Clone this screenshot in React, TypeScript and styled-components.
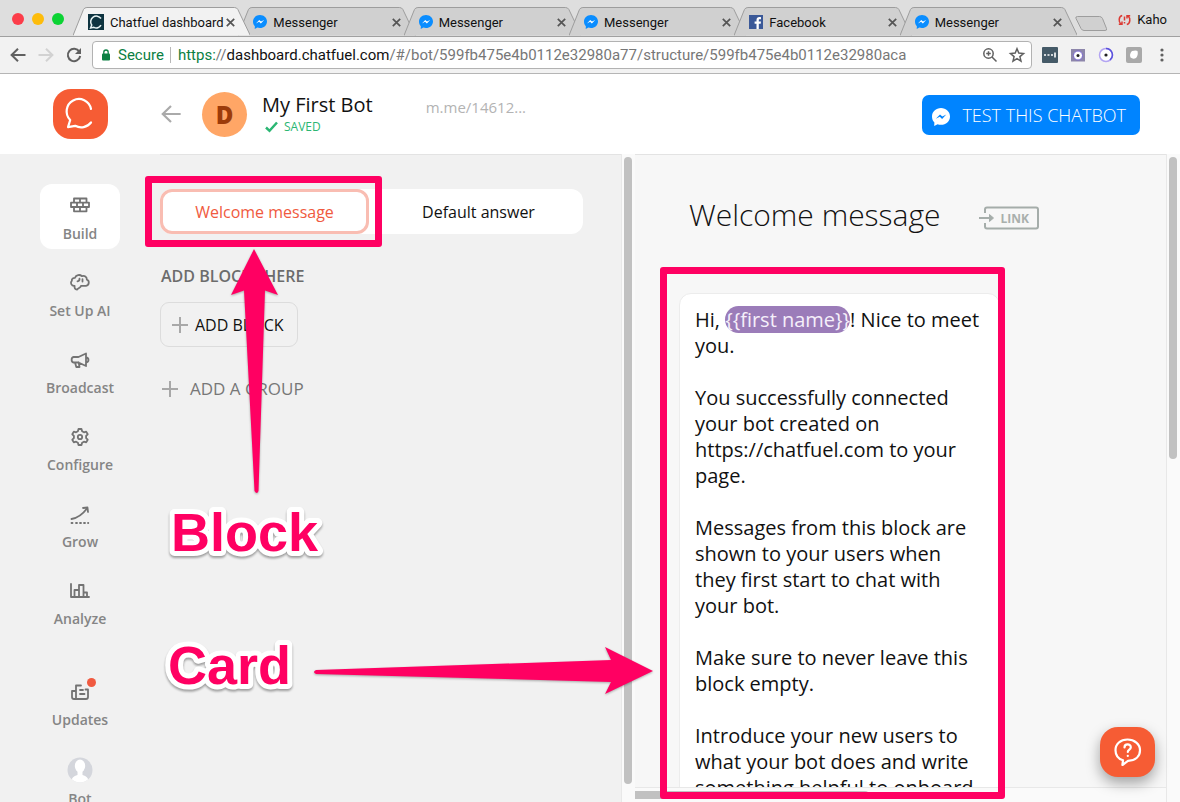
import React from "react";
import styled, { createGlobalStyle, css } from "styled-components";

const ui = `"Open Sans", "Noto Sans", sans-serif`;
const pink = "#ff0062";

const Global = createGlobalStyle`
  * { box-sizing: border-box; }
  body { margin: 0; background: #f1f1f1; font-family: ${ui}; color: #111; }
  button { font: inherit; color: inherit; background: none; border: 0; padding: 0; cursor: pointer; }
  h1, h2, p { margin: 0; font-weight: 400; }
  a { color: inherit; text-decoration: none; }
  svg { display: block; flex: none; }
`;

const Screen = styled.div`
  position: relative;
  display: flex;
  flex-direction: column;
  height: 100vh;
  overflow: hidden;
`;

/* ---------- browser chrome ---------- */
const TabStrip = styled.div`
  display: flex;
  align-items: flex-end;
  height: 37px;
  padding-left: 12px;
  background: #dedede;
  border-bottom: 1px solid #a0a0a0;
  font-family: Roboto, sans-serif;
  font-size: 13px;
`;
const Lights = styled.div`
  display: flex;
  flex: none;
  gap: 8px;
  width: 61px;
  padding-bottom: 11px;
`;
const Light = styled.button<{ $color: string }>`
  width: 12px;
  height: 12px;
  border-radius: 50%;
  background: ${(p) => p.$color};
`;
const Tabs = styled.div`
  display: flex;
  flex: 0 1 992px;
  min-width: 0;
`;
const TabBox = styled.div<{ $active?: boolean }>`
  position: relative;
  z-index: ${(p) => (p.$active ? 2 : 1)};
  flex: 1 1 0;
  min-width: 0;
  height: 29px;
  margin-right: -12px;
  margin-bottom: ${(p) => (p.$active ? "-1px" : "0")};
`;
const TabShape = styled.svg`
  position: absolute;
  inset: 0;
  width: 100%;
  height: 100%;
`;
const TabContent = styled.div`
  position: relative;
  display: flex;
  align-items: center;
  height: 29px;
  padding: 1px 14px 0 15px;
`;
const TabName = styled.button`
  flex: 1;
  min-width: 0;
  padding-left: 6px;
  overflow: hidden;
  white-space: nowrap;
  text-align: left;
`;
const TabClose = styled.button`
  width: 11px;
  height: 11px;
`;
const NewTab = styled.button`
  flex: none;
  width: 36px;
  height: 18px;
  margin: 0 0 3px 9px;
`;
const User = styled.div`
  display: flex;
  align-items: center;
  gap: 6px;
  margin-left: auto;
  padding: 0 13px 9px 0;
`;
const Toolbar = styled.div`
  display: flex;
  align-items: center;
  height: 37px;
  padding: 0 10px;
  background: #f2f2f2;
  border-bottom: 1px solid #b5b5b5;
`;
const NavButtons = styled.div`
  display: flex;
  gap: 12px;
  width: 82px;
`;
const Address = styled.div`
  display: flex;
  align-items: center;
  flex: 1;
  min-width: 0;
  height: 28px;
  padding: 0 5px 0 8px;
  gap: 7px;
  background: #fff;
  border: 1px solid #b2b2b2;
  border-radius: 4px;
  font-family: Roboto, sans-serif;
  font-size: 15px;
  color: #0b8043;
  svg + svg { margin-left: 3px; }
`;
const Secure = styled.span`
  padding-right: 6px;
  border-right: 1px solid #b8b8b8;
  line-height: 16px;
`;
const Url = styled.a`
  flex: 1;
  min-width: 0;
  overflow: hidden;
  white-space: nowrap;
  color: #777;
  b { font-weight: 400; color: #111; }
  i { font-style: normal; color: #0b8043; }
`;
const Extensions = styled.div`
  display: flex;
  align-items: center;
  gap: 12px;
  padding-left: 10px;
`;

/* ---------- app header ---------- */
const Header = styled.header`
  display: flex;
  align-items: center;
  flex: none;
  height: 80px;
  padding-right: 40px;
  background: #fff;
`;
const LogoLink = styled.a`
  width: 160px;
  padding-left: 53px;
`;
const Avatar = styled.div`
  display: grid;
  place-items: center;
  width: 45px;
  height: 45px;
  margin: 0 15px 0 20px;
  border-radius: 50%;
  background: #ffa666;
  color: #9c3b0a;
  font-size: 24px;
  font-weight: 800;
`;
const BotName = styled.h1`
  font-size: 20px;
  line-height: 26px;
`;
const Saved = styled.div`
  display: flex;
  align-items: center;
  gap: 6px;
  padding-left: 3px;
  font-size: 12px;
  line-height: 18px;
  color: #2bb673;
`;
const MeLink = styled.a`
  margin: 0 auto 14px 53px;
  font-size: 15px;
  line-height: 20px;
  color: #b3b3b3;
`;
const TestButton = styled.button`
  display: flex;
  align-items: center;
  gap: 12px;
  height: 40px;
  margin-top: 2px;
  padding: 0 14px 0 10px;
  border-radius: 7px;
  background: #0084ff;
  color: #fff;
  font-size: 18px;
  font-weight: 300;
  white-space: nowrap;
  svg { margin-top: 4px; }
`;

/* ---------- columns ---------- */
const Columns = styled.div`
  display: flex;
  flex: 1;
  min-height: 0;
`;
const Sidebar = styled.nav`
  flex: none;
  width: 160px;
  padding-top: 30px;
  overflow: hidden;
`;
const NavItem = styled.a<{ $active?: boolean; $spaced?: boolean }>`
  position: relative;
  display: flex;
  flex-direction: column;
  align-items: center;
  gap: 6px;
  width: 80px;
  height: 65px;
  margin: ${(p) => (p.$spaced ? "36px" : "0")} auto 12px 40px;
  padding-top: 10px;
  border-radius: 12px;
  background: ${(p) => (p.$active ? "#fff" : "transparent")};
  font-size: 14px;
  font-weight: 600;
  line-height: 20px;
  white-space: nowrap;
  color: #858585;
`;
const Dot = styled.span`
  position: absolute;
  top: 8px;
  right: 24px;
  width: 9px;
  height: 9px;
  border-radius: 50%;
  background: #f05a40;
`;
const Blocks = styled.main`
  flex: 1 1 461px;
  min-width: 0;
  padding: 34px 38px 0 0;
  border-top: 1px solid #e3e3e3;
`;
const BlockPair = styled.div`
  display: flex;
  gap: 5px;
  height: 45px;
  border-radius: 12px;
  background: #fff;
  font-size: 16px;
`;
const BlockButton = styled.button<{ $selected?: boolean }>`
  flex: 1;
  border: 3px solid transparent;
  border-radius: 12px;
  ${(p) =>
    p.$selected &&
    css`
      border-color: #f9bdb2;
      color: #f05a40;
    `}
`;
const GroupTitle = styled.h2`
  margin-top: 31px;
  padding-left: 1px;
  font-size: 16px;
  font-weight: 600;
  line-height: 22px;
  color: #6c6c6c;
`;
const AddBlock = styled.button`
  display: flex;
  align-items: center;
  gap: 7px;
  height: 45px;
  margin-top: 15px;
  padding: 0 13px 0 11px;
  border: 1px solid #dcdcdc;
  border-radius: 9px;
  font-size: 16px;
`;
const AddGroup = styled.button`
  display: flex;
  align-items: center;
  gap: 12px;
  margin-top: 30px;
  padding-left: 2px;
  font-size: 17px;
  line-height: 24px;
  color: #777;
`;
const VTrack = styled.div`
  flex: none;
  width: 14px;
  padding: 3px 3px 0 2px;
  background: #fafafa;
  border-left: 1px solid #e8e8e8;
`;
const VThumb = styled.div<{ $size: string }>`
  width: 8px;
  height: ${(p) => p.$size};
  border-radius: 4px;
  background: #c1c1c1;
`;
const Editor = styled.section`
  display: flex;
  flex-direction: column;
  flex: 1 1 531px;
  min-width: 0;
  border-top: 1px solid #e3e3e3;
  background: #f7f7f7;
`;
const EditorView = styled.div`
  flex: 1;
  min-height: 0;
  padding: 35px 0 0 44px;
  overflow: hidden;
`;
const EditorHead = styled.div`
  display: flex;
  align-items: center;
  gap: 38px;
  padding-left: 10px;
`;
const EditorTitle = styled.h2`
  font-size: 30px;
  font-weight: 300;
  line-height: 50px;
  white-space: nowrap;
`;
const LinkButton = styled.button`
  position: relative;
  display: flex;
  align-items: center;
  width: 61px;
  height: 24px;
  margin-top: 6px;
  padding-left: 22px;
  color: #a9afac;
  font-size: 12px;
  font-weight: 700;
  svg { position: absolute; inset: 0; }
`;
const Card = styled.article`
  width: 321px;
  margin-top: 53px;
  padding: 13px 15px;
  border: 1px solid #ececec;
  border-radius: 12px;
  background: #fff;
  font-size: 20px;
  line-height: 26px;
  p + p { margin-top: 26px; }
`;
const Variable = styled.span`
  border-radius: 14px;
  background: #9b7cb9;
  color: #f5effa;
`;
const HTrack = styled.div`
  flex: none;
  height: 15px;
  padding-top: 3px;
  border-top: 1px solid #e8e8e8;
  background: #fafafa;
`;
const HThumb = styled.div`
  width: 44%;
  height: 8px;
  border-radius: 0 4px 4px 0;
  background: #c1c1c1;
`;
const Help = styled.button`
  position: absolute;
  right: 25px;
  bottom: 25px;
  display: grid;
  place-items: center;
  width: 55px;
  height: 50px;
  border-radius: 18px;
  background: #f65c34;
  box-shadow: 0 6px 14px rgba(0, 0, 0, 0.35);
`;

/* ---------- annotations over the page ---------- */
const Frame = styled.div<{ $x: number; $y: number; $w: number; $h: number }>`
  position: absolute;
  left: ${(p) => p.$x}px;
  top: ${(p) => p.$y}px;
  width: ${(p) => p.$w}px;
  height: ${(p) => p.$h}px;
  border: 7px solid ${pink};
  border-radius: 3px;
  pointer-events: none;
`;
const Arrow = styled.svg<{ $x: number; $y: number }>`
  position: absolute;
  left: ${(p) => p.$x}px;
  top: ${(p) => p.$y}px;
  filter: drop-shadow(0 1px 1px rgba(0, 0, 0, 0.3));
  pointer-events: none;
`;
const NoteBox = styled.svg<{ $x: number; $y: number }>`
  position: absolute;
  left: ${(p) => p.$x}px;
  top: ${(p) => p.$y}px;
  overflow: visible;
  filter: drop-shadow(0 2px 1px rgba(0, 0, 0, 0.35));
  text {
    font: 700 54px "Liberation Sans", sans-serif;
    fill: ${pink};
    stroke: #fff;
    stroke-width: 10px;
    stroke-linejoin: round;
    paint-order: stroke;
  }
`;
const Note = ({ x, y, children }: { x: number; y: number; children: string }) => (
  <NoteBox $x={x} $y={y} width="152" height="60">
    <text x="0" y="48">{children}</text>
  </NoteBox>
);

/* ---------- drawings ---------- */
const Messenger = ({ size = 14, plain = false }) => (
  <svg width={size} height={size} viewBox="0 0 18 18">
    <path d="M9 0C4 0 0 3.7 0 8.4c0 2.6.9 4.6 2.4 6L2.2 18l3.4-1.8c1 .4 2.2.6 3.4.6 5 0 9-3.7 9-8.4S14 0 9 0z" fill={plain ? "#fff" : "#0a8dff"} />
    <path d="M3.8 10.8 8 6.4l2.3 2.1 4-2.1-4.2 4.5-2.3-2.2z" fill={plain ? "#0084ff" : "#fff"} />
  </svg>
);
const FacebookIcon = () => (
  <svg width="14" height="14" viewBox="0 0 14 14">
    <rect width="14" height="14" fill="#3b5998" />
    <path d="M9.8 14V8.7h1.9l.3-2.2H9.8V5.2c0-.7.2-1 1-1H12v-2c-.3 0-.9-.1-1.6-.1-1.8 0-2.9 1-2.9 2.9v1.5H5.6v2.2h1.9V14z" fill="#fff" />
  </svg>
);
const bubble = "M25 9.5A12.3 12.3 0 1 0 4.2 20.5L2 27.6l7.2-1.3A12.3 12.3 0 0 0 25 23";
const ChatfuelFavicon = () => (
  <svg width="16" height="16" viewBox="0 0 16 16">
    <rect width="16" height="16" fill="#0e3440" />
    <path d="M13 4.5A5.4 5.4 0 1 0 3.7 11L2.6 14l3.3-.7A5.4 5.4 0 0 0 13 11.2" fill="none" stroke="#e8f4f4" strokeWidth="1.5" />
  </svg>
);
const Logo = () => (
  <svg width="55" height="50" viewBox="0 0 55 50">
    <rect width="55" height="50" rx="18" fill="#f65c34" />
    <path transform="translate(13 10.5)" d={bubble} fill="none" stroke="#fff" strokeWidth="2.2" strokeLinecap="round" strokeLinejoin="round" />
  </svg>
);
const Cross = () => (
  <svg width="11" height="11" viewBox="0 0 11 11">
    <path d="M1.8 1.8l7.4 7.4M9.2 1.8l-7.4 7.4" stroke="#555" strokeWidth="1.7" />
  </svg>
);
const Back = ({ w = 16, h = 14, color = "#606060", sw = 2 }) => (
  <svg width={w} height={h} viewBox="0 0 16 14" fill="none" stroke={color} strokeWidth={sw}>
    <path d="M15.5 7H1.5M8 .8 1.6 7 8 13.2" />
  </svg>
);
const Forward = () => (
  <svg width="16" height="14" viewBox="0 0 16 14" fill="none" stroke="#d2d2d2" strokeWidth="2">
    <path d="M.5 7h14M8 .8 14.4 7 8 13.2" />
  </svg>
);
const Reload = () => (
  <svg width="16" height="16" viewBox="0 0 16 16">
    <path d="M13.3 4.6A6.2 6.2 0 1 0 14.2 9" fill="none" stroke="#606060" strokeWidth="2" />
    <path d="M15 1v6H9z" fill="#606060" />
  </svg>
);
const Lock = () => (
  <svg width="10" height="12" viewBox="0 0 10 12">
    <rect x="1" y="4.5" width="8" height="7" rx="1" fill="#0b8043" />
    <path d="M2.8 5V3.2a2.2 2.2 0 0 1 4.4 0V5" fill="none" stroke="#0b8043" strokeWidth="1.3" />
  </svg>
);
const Plus = () => (
  <svg width="16" height="16" viewBox="0 0 16 16">
    <path d="M8 0v16M0 8h16" stroke="#a8a8a8" strokeWidth="2" />
  </svg>
);
const Line = ({ children }: { children: React.ReactNode }) => (
  <svg width="22" height="24" viewBox="0 0 22 24" fill="none" stroke="#737373" strokeWidth="1.8" strokeLinejoin="round" strokeLinecap="round">
    {children}
  </svg>
);
const icons: Record<string, React.ReactNode> = {
  Build: (
    <Line>
      <path d="M5 4.5h12.5v4.2H5zM2 8.7h18v4.3H2zM5 13h12.5v4.3H5zM11 4.5v4.2M8 8.7V13M14 8.7V13M11 13v4.3" />
    </Line>
  ),
  "Set Up AI": (
    <Line>
      <path d="M6 6.8C7 3.8 11 3.200 12.800 5.200c2.700-1 5.300.8 5 3.400 2.900 1 2.600 5.600-.8 6.300h-5c-.3 2.200-3 1.800-4 3.800C6 18.500 5.300 17 5.600 15 2 15 1 11.500 2.900 9.600 2.500 8 4 6.700 6 6.800zM8.500 10.300c1.400-.2 2.200-1.200 2-2.600M13.500 8.200v2.300" />
    </Line>
  ),
  Broadcast: (
    <Line>
      <path d="M4.5 9C2 9.500 2 14 4.5 14.5H9.500L17 18V5.500L9.500 9zM17 9.500c3.300.4 3.300 4.600 0 5M6 14.500l1.300 4.500h3.200l-.8-4.500" />
    </Line>
  ),
  Configure: (
    <Line>
      <path d="M9.500 4h3l.6 2.300 1.800 1 2.300-.7 1.500 2.700-1.600 1.600v2.200l1.600 1.600-1.500 2.700-2.300-.7-1.800 1-.6 2.300h-3l-.6-2.300-1.800-1-2.300.7-1.500-2.700 1.600-1.600v-2.200L3.300 9.300l1.500-2.700 2.300.7 1.800-1z" />
      <circle cx="11" cy="12" r="2.2" />
    </Line>
  ),
  Grow: (
    <Line>
      <path d="M2.500 17C9 16 13.500 12.500 18 6.500M14 6l4.500-.5.5 4.500M2.500 21H3.500M7 21h1M11 21h1M15 21h1M19 21h.3" />
    </Line>
  ),
  Analyze: (
    <Line>
      <path d="M2 5v13h18M5.500 18V11H10M10 18V6h4.500v12M14.500 13.500H18V18" />
    </Line>
  ),
  Updates: (
    <Line>
      <path d="M7 19V5.500h5M16.500 9.500H19v7.500q0 2-2 2H5q-2 0-2-2v-6h4M7 19V10.500M11 10h3M11 14h4.500" />
    </Line>
  ),
  Bot: (
    <svg width="26" height="26" viewBox="0 0 26 26">
      <defs>
        <clipPath id="face"><circle cx="13" cy="13" r="12.5" /></clipPath>
      </defs>
      <g clipPath="url(#face)">
        <rect width="26" height="26" fill="#d4d6dc" />
        <ellipse cx="13" cy="9" rx="5.2" ry="6.5" fill="#fff" />
        <path d="M10.5 13h5v5c4 1 6 3 6.500 8H4c.5-5 2.500-7 6.500-8z" fill="#fff" />
      </g>
    </svg>
  ),
};

const tabs = [
  { name: "Chatfuel dashboard", icon: <ChatfuelFavicon />, active: true },
  { name: "Messenger", icon: <Messenger /> },
  { name: "Messenger", icon: <Messenger /> },
  { name: "Messenger", icon: <Messenger /> },
  { name: "Facebook", icon: <FacebookIcon /> },
  { name: "Messenger", icon: <Messenger /> },
];

const Tab = ({ name, icon, active }: { name: string; icon: React.ReactNode; active?: boolean }) => (
  <TabBox $active={active}>
    <TabShape viewBox="0 0 178 29" preserveAspectRatio="none">
      <path d="M0 28.5 10.5 2.5Q11.5.5 14 .5H162q2.5 0 3.5 2L178 28.5z" fill={active ? "#f2f2f2" : "#d0d0d0"} />
      <path d="M0 28.5 10.5 2.5Q11.5.5 14 .5H162q2.5 0 3.5 2L178 28.5" fill="none" stroke="#9d9d9d" />
    </TabShape>
    <TabContent>
      {icon}
      <TabName>{name}</TabName>
      <TabClose aria-label="Close tab"><Cross /></TabClose>
    </TabContent>
  </TabBox>
);

export default function App() {
  return (
    <Screen>
      <Global />
      <TabStrip>
        <Lights>
          <Light $color="#fc3d4a" aria-label="Close" />
          <Light $color="#fdbc0b" aria-label="Minimize" />
          <Light $color="#0cd334" aria-label="Zoom" />
        </Lights>
        <Tabs>
          {tabs.map((t, i) => <Tab key={i} {...t} />)}
        </Tabs>
        <NewTab aria-label="New tab">
          <svg width="36" height="18" viewBox="0 0 36 18">
            <path d="M3.5 1.500h22q2 0 3 2l4 10q.8 2-1.500 2H10q-2 0-3-2l-5-10q-.8-2 1.500-2z" fill="#d0d0d0" stroke="#9d9d9d" />
          </svg>
        </NewTab>
        <User>
          <svg width="13" height="12" viewBox="0 0 13 12" fill="none" stroke="#dc3b34" strokeWidth="1.5">
            <path d="M4.200 1.500C.5 2.500.3 8 3 10M.8 10.300H4V7.500M8.800 10.500c3.700-1 3.900-6.500 1.200-8.500M12.200 1.700H9v2.800M6.500 2.500v4M6.500 8v1.500" />
          </svg>
          Kaho
        </User>
      </TabStrip>
      <Toolbar>
        <NavButtons>
          <button aria-label="Back"><Back /></button>
          <button aria-label="Forward"><Forward /></button>
          <button aria-label="Reload"><Reload /></button>
        </NavButtons>
        <Address>
          <Lock />
          <Secure>Secure</Secure>
          <Url href="#"><i>https:</i>//<b>dashboard.chatfuel.com</b>/#/bot/599fb475e4b0112e32980a77/structure/599fb475e4b0112e32980aca</Url>
          <svg width="16" height="16" viewBox="0 0 16 16" fill="none" stroke="#606060" strokeWidth="1.5">
            <circle cx="6.5" cy="6.5" r="4.7" /><path d="M10 10l4.500 4.500M4.200 6.500h4.600M6.500 4.200v4.600" />
          </svg>
          <svg width="18" height="18" viewBox="0 0 18 18" fill="none" stroke="#606060" strokeWidth="1.5">
            <path d="M9 2.700l1.800 4.400 4.700.4-3.600 3.100 1.100 4.600L9 12.700l-4 2.500 1.100-4.600-3.600-3.100 4.700-.4z" />
          </svg>
        </Address>
        <Extensions>
          <svg width="16" height="16" viewBox="0 0 16 16">
            <rect width="16" height="16" rx="1" fill="#455a68" />
            <path d="M2 8h2M5.500 8h2M9 8h2M13 5.500v5" stroke="#fff" strokeWidth="1.6" />
          </svg>
          <svg width="16" height="16" viewBox="0 0 16 16">
            <rect x="1" y="2" width="14" height="12.5" fill="#8d86ab" />
            <circle cx="8" cy="8.5" r="4.5" fill="#fff" stroke="#7a68d0" /><circle cx="8" cy="8.5" r="1.5" fill="#222" />
          </svg>
          <svg width="16" height="16" viewBox="0 0 16 16">
            <circle cx="8" cy="8" r="6.5" fill="#fff" stroke="#b3a4f2" strokeWidth="1.5" />
            <path d="M8 1.500A6.500 6.500 0 0 1 12 13" fill="none" stroke="#5a52dc" strokeWidth="1.5" /><circle cx="8" cy="8" r="1.6" fill="#222" />
          </svg>
          <svg width="16" height="16" viewBox="0 0 16 16">
            <rect width="16" height="16" rx="2" fill="#a9a9a9" />
            <path d="M6 4q4-1 5.500 0Q12.500 8 10 11q-3 1.500-5.500-.5Q3 7 6 4z" fill="#fff" />
          </svg>
          <svg width="16" height="16" viewBox="0 0 16 16" fill="#606060">
            <circle cx="8" cy="3" r="1.6" /><circle cx="8" cy="8" r="1.6" /><circle cx="8" cy="13" r="1.6" />
          </svg>
        </Extensions>
      </Toolbar>

      <Header>
        <LogoLink href="#" aria-label="Home"><Logo /></LogoLink>
        <button aria-label="Back to bots"><Back w={22} h={18} color="#aaa" sw={1.7} /></button>
        <Avatar>D</Avatar>
        <div>
          <BotName>My First Bot</BotName>
          <Saved>
            <svg width="13" height="12" viewBox="0 0 13 12"><path d="M1 6.500l3.500 3.300L12 1.500" fill="none" stroke="#2bb673" strokeWidth="2.5" /></svg>
            SAVED
          </Saved>
        </div>
        <MeLink href="#">m.me/14612...</MeLink>
        <TestButton><Messenger size={18} plain />TEST THIS CHATBOT</TestButton>
      </Header>

      <Columns>
        <Sidebar>
          {Object.keys(icons).map((name) => (
            <NavItem key={name} href="#" $active={name === "Build"} $spaced={name === "Updates"}>
              {icons[name]}
              {name === "Updates" && <Dot />}
              {name}
            </NavItem>
          ))}
        </Sidebar>
        <Blocks>
          <BlockPair>
            <BlockButton $selected>Welcome message</BlockButton>
            <BlockButton>Default answer</BlockButton>
          </BlockPair>
          <GroupTitle>ADD BLOCKS HERE</GroupTitle>
          <AddBlock><Plus />ADD BLOCK</AddBlock>
          <AddGroup><Plus />ADD A GROUP</AddGroup>
        </Blocks>
        <VTrack><VThumb $size="calc(100% - 18px)" /></VTrack>
        <Editor>
          <EditorView>
            <EditorHead>
              <EditorTitle>Welcome message</EditorTitle>
              <LinkButton>
                <svg width="61" height="24" viewBox="0 0 61 24" fill="none" stroke="#a5adaa" strokeWidth="2">
                  <path d="M6 7V3.500Q6 1.500 8 1.500H57Q59 1.500 59 3.500V20.500Q59 22.500 57 22.500H8Q6 22.500 6 20.500V17M0 12H13" />
                  <path d="M10.500 8.500l4 3.500-4 3.500z" fill="#a5adaa" strokeWidth="1" />
                </svg>
                LINK
              </LinkButton>
            </EditorHead>
            <Card>
              <p>Hi, <Variable>{"{{first name}}"}</Variable>! Nice to meet you.</p>
              <p>You successfully connected your bot created on https://chatfuel.com to your page.</p>
              <p>Messages from this block are shown to your users when they first start to chat with your bot.</p>
              <p>Make sure to never leave this block empty.</p>
              <p>Introduce your new users to what your bot does and write something helpful to onboard</p>
            </Card>
          </EditorView>
          <HTrack><HThumb /></HTrack>
        </Editor>
        <VTrack><VThumb $size="302px" /></VTrack>
      </Columns>

      <Frame $x={145} $y={176} $w={237} $h={71} />
      <Frame $x={660} $y={267} $w={345} $h={532} />
      <Arrow $x={226} $y={248} width="56" height="250" viewBox="0 0 56 250">
        <path d="M28 1 52 47 39 42.500 32.500 243q-1.500 4-4 0L18 42.500 5 47z" fill={pink} />
      </Arrow>
      <Arrow $x={310} $y={644} width="346" height="54" viewBox="0 0 346 54">
        <path d="M343 27 295 50 301 38 6 30q-4-2 0-4L301 16 295 3z" fill={pink} />
      </Arrow>
      <Note x={171} y={503}>Block</Note>
      <Note x={168} y={636}>Card</Note>
      <Help aria-label="Help">
        <svg width="30" height="30" viewBox="0 0 30 30" fill="none" stroke="#fff" strokeWidth="2.2" strokeLinejoin="round" strokeLinecap="round">
          <path d="M14.500 2.500C7.500 2.500 2.500 7 2.500 13.200c0 5.300 3.500 8.800 7.500 10.100l-.6 4.700 5.600-4.200C22.500 23.500 27 19.300 27 13.200S21.500 2.500 14.500 2.500z" />
          <path d="M11.500 10.500c0-4 6.300-4 6.300-.3 0 2.300-3 2.400-3 4.800M14.800 18.800v.2" />
        </svg>
      </Help>
    </Screen>
  );
}
